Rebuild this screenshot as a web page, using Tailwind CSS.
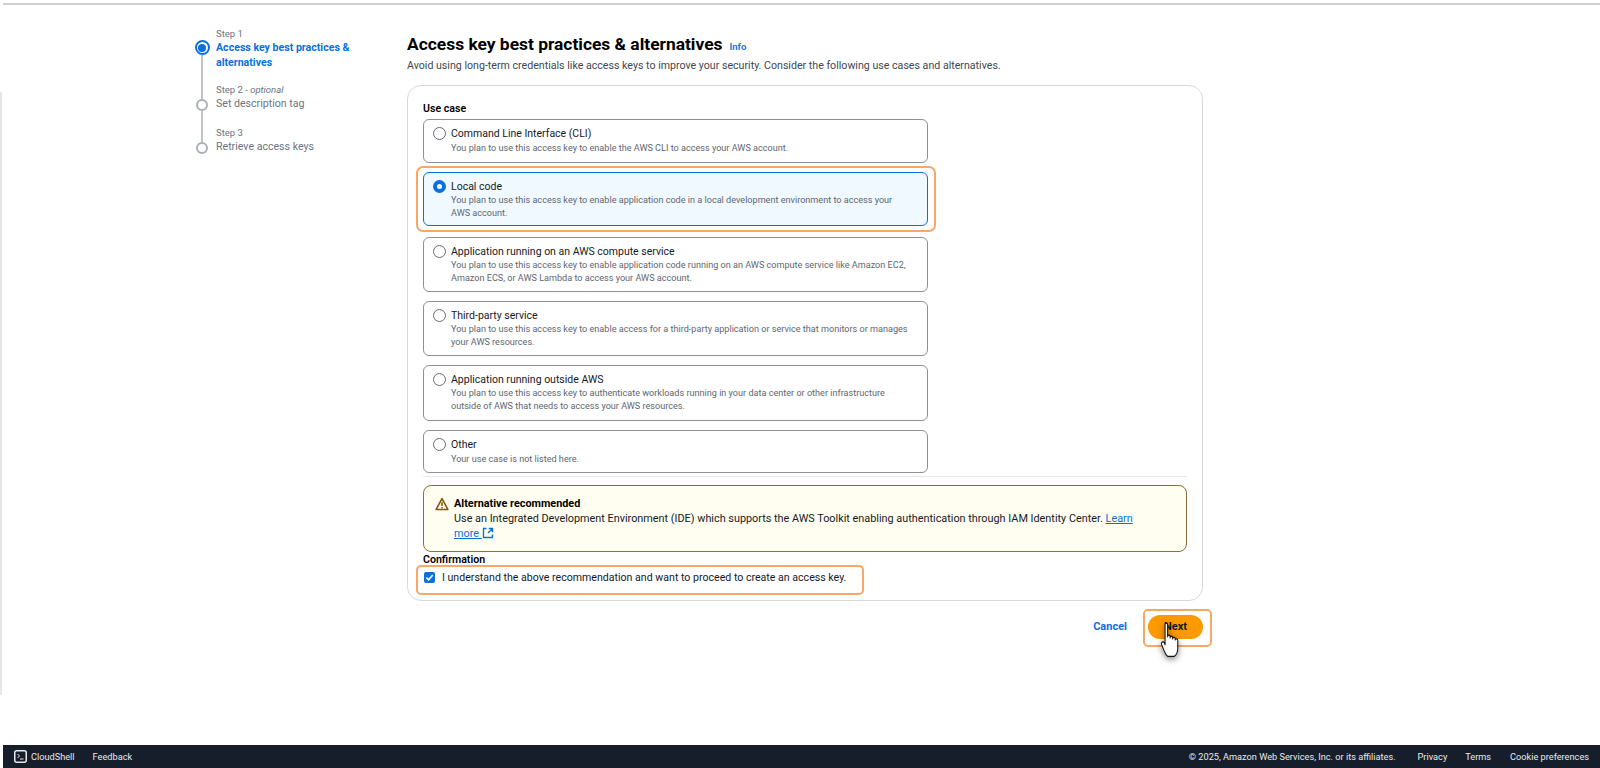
<!DOCTYPE html>
<html lang="en">
<head>
  <meta charset="UTF-8">
  <title>Create access key</title>
  <script src="https://cdn.jsdelivr.net/npm/@tailwindcss/browser@4"></script>
</head>
<body class="bg-white text-[#16191f] font-['Roboto',sans-serif]">
  <div class="h-[768px] flex flex-col overflow-hidden">
    <div class="h-[5px] ml-[3px] border-b-2 border-[#d0d0d0] shrink-0"></div>

    <main class="flex-1 flex pt-[21px]">
      <div class="w-[2px] mr-[193px] mt-[66px] mb-[50px] bg-[#e6e6e6] shrink-0"></div>

      <!-- wizard steps -->
      <nav class="w-[212px] shrink-0 text-[10.6px] leading-[15px]">
        <div class="flex gap-[7px] h-[44px]">
          <div class="w-[14px] flex flex-col items-center pt-[14px]">
            <span class="w-[15px] h-[15px] shrink-0 rounded-full border-2 border-[#0a6fe0] flex items-center justify-center"><span class="w-[8px] h-[8px] rounded-full bg-[#0a6fe0]"></span></span>
            <span class="w-[2px] h-[44px] shrink-0 bg-[#c0c4c9]"></span>
          </div>
          <div class="w-[140px]">
            <p class="text-[9.5px] leading-[15px] text-[#6b7480]">Step 1</p>
            <p class="font-bold text-[#0a6fe0] -mt-[1px]">Access key best practices &amp; alternatives</p>
          </div>
        </div>
        <div class="flex gap-[7px] h-[29px] mt-[12px]">
          <div class="w-[14px] flex flex-col items-center pt-[17px]">
            <span class="w-[12px] h-[12px] shrink-0 rounded-full border-2 border-[#aab0b8]"></span>
            <span class="w-[2px] h-[31px] shrink-0 bg-[#c0c4c9]"></span>
          </div>
          <div>
            <p class="text-[9.5px] leading-[15px] text-[#6b7480]">Step 2 - <i>optional</i></p>
            <p class="text-[#6b7480] -mt-[1px]">Set description tag</p>
          </div>
        </div>
        <div class="flex gap-[7px] h-[29px] mt-[14px]">
          <div class="w-[14px] flex flex-col items-center pt-[17px]">
            <span class="w-[12px] h-[12px] shrink-0 rounded-full border-2 border-[#aab0b8]"></span>
          </div>
          <div>
            <p class="text-[9.5px] leading-[15px] text-[#6b7480]">Step 3</p>
            <p class="text-[#6b7480] -mt-[1px]">Retrieve access keys</p>
          </div>
        </div>
      </nav>

      <section class="w-[796px]">
        <h1 class="flex items-baseline gap-[7px] text-[17.4px] leading-[22px] font-bold text-black mt-[7px]">Access key best practices &amp; alternatives <a class="text-[9.5px] font-semibold text-[#0a6fe0]">Info</a></h1>
        <p class="text-[10.63px] leading-[16px] text-[#414750]">Avoid using long-term credentials like access keys to improve your security. Consider the following use cases and alternatives.</p>

        <div class="mt-[11px] h-[516px] rounded-[14px] border border-[#d5d9dd] px-[15px] pt-[15px]">
          <p class="text-[10.6px] leading-[16px] font-semibold text-black">Use case</p>
          <div class="w-[505px] flex flex-col gap-[9px] mt-[2px]">
            <label class="h-[44px] flex gap-[5px] rounded-[6px] border border-[#8d9096] pl-[9px] pt-[6px] pr-[12px]">
              <span class="mt-[1px] w-[13px] h-[13px] shrink-0 rounded-full border border-[#666c75]"></span>
              <span><b class="block font-normal text-[10.5px] leading-[15px]">Command Line Interface (CLI)</b><span class="block text-[9.1px] leading-[14px] text-[#5f6670]">You plan to use this access key to enable the AWS CLI to access your AWS account.</span></span>
            </label>
            <label class="relative h-[54px] mb-[2px] flex gap-[5px] rounded-[6px] border border-[#0a6fe0] bg-[#f0f9ff] pl-[9px] pt-[6px] pr-[30px]">
              <span class="mt-[1px] w-[13px] h-[13px] shrink-0 rounded-full border-[4px] border-[#0a6fe0] bg-white"></span>
              <span><b class="block font-normal text-[10.5px] leading-[15px]">Local code</b><span class="block text-[9.1px] leading-[13px] text-[#5f6670]">You plan to use this access key to enable application code in a local development environment to access your AWS account.</span></span>
              <span class="absolute -left-[8px] -right-[9px] -top-[7px] -bottom-[7px] rounded-[7px] border-2 border-[#f7a868]"></span>
            </label>
            <label class="h-[55px] flex gap-[5px] rounded-[6px] border border-[#8d9096] pl-[9px] pt-[6px] pr-[12px]">
              <span class="mt-[1px] w-[13px] h-[13px] shrink-0 rounded-full border border-[#666c75]"></span>
              <span><b class="block font-normal text-[10.5px] leading-[15px]">Application running on an AWS compute service</b><span class="block text-[9.1px] leading-[13px] text-[#5f6670]">You plan to use this access key to enable application code running on an AWS compute service like Amazon EC2, Amazon ECS, or AWS Lambda to access your AWS account.</span></span>
            </label>
            <label class="h-[55px] flex gap-[5px] rounded-[6px] border border-[#8d9096] pl-[9px] pt-[6px] pr-[12px]">
              <span class="mt-[1px] w-[13px] h-[13px] shrink-0 rounded-full border border-[#666c75]"></span>
              <span><b class="block font-normal text-[10.5px] leading-[15px]">Third-party service</b><span class="block text-[9.1px] leading-[13px] text-[#5f6670]">You plan to use this access key to enable access for a third-party application or service that monitors or manages your AWS resources.</span></span>
            </label>
            <label class="h-[56px] flex gap-[5px] rounded-[6px] border border-[#8d9096] pl-[9px] pt-[6px] pr-[12px]">
              <span class="mt-[1px] w-[13px] h-[13px] shrink-0 rounded-full border border-[#666c75]"></span>
              <span><b class="block font-normal text-[10.5px] leading-[15px]">Application running outside AWS</b><span class="block text-[9.1px] leading-[13px] text-[#5f6670]">You plan to use this access key to authenticate workloads running in your data center or other infrastructure outside of AWS that needs to access your AWS resources.</span></span>
            </label>
            <label class="h-[43px] flex gap-[5px] rounded-[6px] border border-[#8d9096] pl-[9px] pt-[6px] pr-[12px]">
              <span class="mt-[1px] w-[13px] h-[13px] shrink-0 rounded-full border border-[#666c75]"></span>
              <span><b class="block font-normal text-[10.5px] leading-[15px]">Other</b><span class="block text-[9.1px] leading-[14px] text-[#5f6670]">Your use case is not listed here.</span></span>
            </label>
          </div>

          <div class="border-t border-[#e6e8ea] mt-[3px] pt-[8px]">
            <div class="h-[67px] rounded-[8px] border border-[#8d6e3c] bg-[#fffef0] flex gap-[5px] pl-[11px] pt-[10px] pr-[52px]">
              <svg class="w-[14px] h-[14px] mt-[1px] shrink-0" viewBox="0 0 16 16" fill="none" stroke="#855900" stroke-width="1.8"><path d="M8 1.8 1.3 14.2h13.4z" stroke-linejoin="round"/><path d="M8 6v4.4M8 11.4v1.4"/></svg>
              <div class="text-[10.85px] leading-[15px]">
                <p class="font-bold text-black">Alternative recommended</p>
                <p class="text-[#16191f]">Use an Integrated Development Environment (IDE) which supports the AWS Toolkit enabling authentication through IAM Identity Center. <a class="text-[#0a6fe0] underline">Learn</a> <a class="text-[#0a6fe0] underline">more <svg class="inline w-[12px] h-[12px] align-[-2px]" viewBox="0 0 16 16" fill="none" stroke="#0a6fe0" stroke-width="1.8"><path d="M6 2H2v12h12v-4M9 2h5v5M14 2 8 8"/></svg></a></p>
              </div>
            </div>
          </div>

          <p class="text-[10.6px] leading-[15px] font-semibold text-black">Confirmation</p>
          <div class="relative mt-[2px] flex items-center gap-[7px] h-[22px] w-[440px] pl-[1px] pb-[5px]">
            <span class="w-[11px] h-[11px] rounded-[2px] bg-[#0a6fe0] flex items-center justify-center shrink-0">
              <svg class="w-[9px] h-[9px]" viewBox="0 0 10 10" fill="none" stroke="#fff" stroke-width="1.8"><path d="M1.5 5.2 4 7.6 8.6 2.2"/></svg>
            </span>
            <span class="text-[10.6px] leading-[15px] whitespace-nowrap">I understand the above recommendation and want to proceed to create an access key.</span>
            <span class="absolute -left-[7px] -right-[1px] -top-[4px] -bottom-[4px] rounded-[5px] border-2 border-[#f7a868]"></span>
          </div>
        </div>

        <div class="flex justify-end items-center gap-[21px] mt-[14px]">
          <a class="text-[11px] font-bold text-[#0a6fe0]">Cancel</a>
          <button class="relative w-[55px] h-[24px] rounded-full bg-[#ff9900] text-[11px] font-bold text-[#0f1b2a]">Next
            <span class="absolute -left-[5px] -right-[9px] -top-[6px] -bottom-[8px] rounded-[5px] border-2 border-[#f7a868]"></span>
            <svg class="absolute left-[12px] top-[7px] w-[22px] h-[38px] drop-shadow-[0_2px_3px_rgba(0,0,0,0.5)]" viewBox="0 0 26 36" preserveAspectRatio="none" fill="#fff" stroke="#111" stroke-width="1.2" stroke-linejoin="round"><path d="M6 2.500c0-2 3-2 3 0V14c0-2 3-2 3 0v1c0-2 3-2 3 0v1c0-2 3-1.800 3 0v1c0-1.500 3-1.500 3 .5v7c0 4-2 7-4 8H9c-2-1-3-3-4-5l-3-6c-1-2 1-3.500 3-2l1 2z"/></svg>
          </button>
        </div>
      </section>
    </main>

    <footer class="h-[23px] shrink-0 ml-[3px] bg-[#161e2b] text-[#e8eaed] text-[9.2px] flex items-center pl-[11px] pr-[11px]">
      <svg class="w-[13px] h-[13px]" viewBox="0 0 13 13"><rect x="0.750" y="0.750" width="11.500" height="11.500" rx="2" fill="#161e2b" stroke="#e8eaed" stroke-width="1.500"/><path d="M3.500 4 5.500 6 3.500 8M6 9H9.500" stroke="#e8eaed" fill="none"/></svg>
      <span class="ml-[4px]">CloudShell</span>
      <span class="ml-[18px]">Feedback</span>
      <span class="ml-auto">© 2025, Amazon Web Services, Inc. or its affiliates.</span>
      <span class="ml-[22px]">Privacy</span>
      <span class="ml-[18px]">Terms</span>
      <span class="ml-[19px]">Cookie preferences</span>
    </footer>
  </div>
</body>
</html>
